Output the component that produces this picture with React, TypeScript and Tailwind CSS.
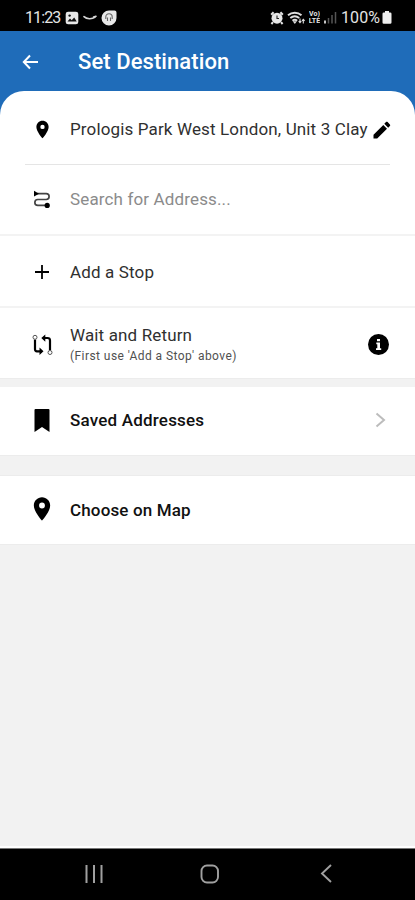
import type { ReactNode } from "react";

const PLACE =
  "M12 2C8.13 2 5 5.13 5 9c0 5.25 7 13 7 13s7-7.75 7-13c0-3.87-3.13-7-7-7zm0 9.5a2.5 2.5 0 0 1 0-5 2.5 2.5 0 0 1 0 5z";

function Pin({ className }: { className: string }) {
  return (
    <svg viewBox="0 0 24 24" className={className} fill="#000">
      <path d={PLACE} />
    </svg>
  );
}

function StatusBar() {
  return (
    <div className="flex h-[31px] items-center bg-black pt-[4px] text-[#e4e4e4]">
      <span className="ml-[25px] w-[36px] whitespace-nowrap text-[16px] leading-none tracking-[-0.9px]">11:23</span>
      <svg className="ml-[4px] h-[14px] w-[14px]" viewBox="0 0 14 14">
        <rect x="0.7" y="0.7" width="12.6" height="12.6" rx="2.4" fill="#e8e8e8" />
        <path d="M2.5 10.5 5 7.6l1.7 1.6 2.5-2.6 2.5 3.9z" fill="#111" />
        <circle cx="4.6" cy="4.6" r="1.2" fill="#111" />
      </svg>
      <svg className="ml-[4px] h-[8px] w-[14px]" viewBox="0 0 14 8">
        <path d="M1 2.6c2.8 2.6 7.8 2.8 11.2.4M10.6 3l2.4-.8" fill="none" stroke="#d6d6d6" strokeWidth="1.6" strokeLinecap="round" />
      </svg>
      <svg className="ml-[4px] h-[16px] w-[16px]" viewBox="0 0 16 16">
        <path d="M8 .5H13.5Q15.5.5 15.5 2.5V8A7.5 7.5 0 1 1 8 .5z" fill="#e8e8e8" />
        <path d="M4.8 9V7a3.2 3.2 0 0 1 6.4 0v2M6.500 7.500v3.500M9.500 7.500v3.500" fill="none" stroke="#666" strokeWidth="1.1" />
      </svg>
      <svg className="ml-[153px] h-[14px] w-[14px]" viewBox="0 0 14 14">
        <path d="M1.200 3.800 3.600 1.200M12.800 3.800l-2.400-2.600M3 11.200l-1.600 1.800M11 11.200l1.600 1.800" stroke="#e4e4e4" strokeWidth="2" />
        <circle cx="7" cy="7.200" r="5.500" fill="#e8e8e8" />
        <path d="M7 4.500v3h2" fill="none" stroke="#222" strokeWidth="1.100" />
      </svg>
      <svg className="ml-[3px] h-[14px] w-[19px]" viewBox="0 0 19 14">
        <path d="M1 4.200C5 .9 10.600.9 14.500 4.200M3.300 7c2.700-2.200 6.200-2.200 8.900 0M5.500 9.700c1.400-1.200 3.200-1.200 4.600 0" fill="none" stroke="#dedede" strokeWidth="2" />
        <path d="M7.800 13 5.700 10.200h4.200z" fill="#dedede" />
        <path d="M13 7.500v4M11.700 10.200l1.300 1.500 1.300-1.500M16.300 12.500v-4M15 9.800l1.300-1.500 1.300 1.500" fill="none" stroke="#dedede" strokeWidth="1.100" />
      </svg>
      <div className="ml-[2px] flex w-[13px] flex-col items-center text-[7px] font-bold leading-[7px]">
        <span className="block h-[7px] overflow-hidden">Vo)</span>
        <span className="block h-[7px] overflow-hidden">LTE</span>
      </div>
      <svg className="ml-[3px] h-[13px] w-[13px]" viewBox="0 0 13 13">
        <path d="M1 12.500V9.500" stroke="#ddd" strokeWidth="1.800" />
        <path d="M4.500 12.500V7M8 12.500V4M11.500 12.500V1" stroke="#555" strokeWidth="1.500" />
      </svg>
      <span className="ml-[4px] w-[41px] whitespace-nowrap text-[16px] leading-none tracking-[0.100px]">100%</span>
      <svg className="h-[13px] w-[10px]" viewBox="0 0 10 13">
        <path d="M3 0h4v1.500h1.200q1.300 0 1.300 1.300v8.700q0 1.300-1.300 1.300H1.800Q.5 12.800.5 11.500V2.800q0-1.300 1.300-1.300H3z" fill="#eee" />
      </svg>
    </div>
  );
}

function Row({ icon, children, className }: { icon: ReactNode; children: ReactNode; className: string }) {
  return (
    <div className={`flex items-center pl-[28px] ${className}`}>
      <div className="mr-[14px] flex w-[28px] shrink-0 items-center justify-center">{icon}</div>
      {children}
    </div>
  );
}

export default function App() {
  return (
    <div className="flex h-[900px] w-[415px] flex-col overflow-hidden bg-[#f2f2f2] font-[Roboto,sans-serif] text-[#303030]">
      <StatusBar />
      <div className="bg-[#1f6cb9]">
        <header className="flex h-[60px] items-center">
          <svg className="ml-[22px] mt-[1px] h-[16px] w-[17px]" viewBox="0 0 17 16">
            <path d="M8 1.500 1.800 8 8 14.500M2 8h14" fill="none" stroke="#fff" strokeWidth="2" />
          </svg>
          <h1 className="ml-[39px] mt-[1px] whitespace-nowrap text-[22px] font-medium tracking-[0.080px] text-white">Set Destination</h1>
        </header>
        <div className="rounded-t-[24px] bg-white">
          <Row className="h-[73px] pt-[4px]" icon={<Pin className="h-[21px] w-[21px]" />}>
            <span className="w-[298px] whitespace-nowrap pt-px text-[17px] tracking-[0.140px]">Prologis Park West London, Unit 3 Clay</span>
            <svg className="ml-[5px] h-[18px] w-[18px]" viewBox="0 0 18 18">
              <path d="M.5 13.800v3.700h3.700L14 7.700 10.300 4zM16.900 5c.5-.5.5-1.100 0-1.600l-2.300-2.300c-.5-.5-1.100-.5-1.600 0l-1.700 1.700L15.200 6.700z" fill="#000" />
            </svg>
          </Row>
          <div className="mx-[25px] h-px bg-[#e5e5e5]" />
        </div>
      </div>
      <Row
        className="h-[69px] bg-white"
        icon={
          <svg className="h-[19px] w-[18px]" viewBox="0 0 18 19">
            <path d="M4 3.700h9.200a2.900 2.900 0 0 1 0 5.800H4.800a2.900 2.900 0 0 0 0 5.900H13" fill="none" stroke="#444" strokeWidth="1.700" />
            <path d="M1 .8 6 3.700 1 6.600z" fill="#000" />
            <circle cx="14.200" cy="15.400" r="2.600" fill="#000" />
          </svg>
        }
      >
        <span className="whitespace-nowrap text-[17px] tracking-[0.140px] text-[#8b8b8b]">Search for Address...</span>
      </Row>
      <Row
        className="h-[72px] border-t-2 border-[#f3f3f3] bg-white"
        icon={
          <svg className="mt-[2px] h-[14px] w-[14px]" viewBox="0 0 14 14">
            <path d="M7 0v14M0 7h14" stroke="#000" strokeWidth="1.800" />
          </svg>
        }
      >
        <span className="whitespace-nowrap pt-[3px] text-[17px] tracking-[0.140px]">Add a Stop</span>
      </Row>
      <Row
        className="h-[72px] border-t-2 border-[#f3f3f3] bg-white"
        icon={
          <svg className="mt-[4px] h-[22px] w-[21px]" viewBox="0 0 21 22">
            <g fill="none" stroke="#000" strokeWidth="2.200">
              <path d="M3 5.500v9.800q0 2 2 2h5" />
              <path d="M18 16.500V6.500q0-2.500-2.500-2.500H11" />
            </g>
            <path d="M7.500 13.500 11.500 17.300 7.500 21zM13.300.500 9.300 4l4 3.700z" fill="#000" />
            <circle cx="3" cy="3.300" r="2" fill="#fff" stroke="#555" />
            <circle cx="18" cy="18.500" r="2" fill="#fff" stroke="#555" />
          </svg>
        }
      >
        <div className="flex w-[298px] flex-col pt-[4px]">
          <span className="whitespace-nowrap text-[17px] leading-[22px] tracking-[0.140px]">Wait and Return</span>
          <span className="whitespace-nowrap text-[12px] leading-[21px] tracking-[0.430px] text-[#505050]">(First use 'Add a Stop' above)</span>
        </div>
        <svg className="mt-[2px] h-[21px] w-[21px]" viewBox="0 0 21 21">
          <circle cx="10.500" cy="10.500" r="10.500" fill="#000" />
          <path d="M9 5h3v2.200H9zM8.300 8.500H12v5.700h1.200V16H8v-1.800h1.300v-4h-1z" fill="#fff" />
        </svg>
      </Row>
      <div className="h-[9px] border-t border-[#ececec]" />
      <Row
        className="h-[68px] bg-white"
        icon={
          <svg className="mt-[-2px] h-[23px] w-[16px]" viewBox="0 0 16 23">
            <path d="M.5 1q0-1 1-1h13q1 0 1 1v22L8 18 .5 23z" fill="#000" />
          </svg>
        }
      >
        <span className="w-[300px] whitespace-nowrap text-[17px] font-medium tracking-[0.200px] text-[#111]">Saved Addresses</span>
        <svg className="ml-[5px] mt-[-2px] h-[16px] w-[11px]" viewBox="0 0 11 16">
          <path d="m1.500 1.500 7.500 6.500-7.500 6.500" fill="none" stroke="#bcbcbc" strokeWidth="2" />
        </svg>
      </Row>
      <div className="h-[21px] border-y border-[#ececec]" />
      <Row className="h-[69px] border-b border-[#ececec] bg-white" icon={<Pin className="mt-[-2px] h-[28px] w-[28px]" />}>
        <span className="whitespace-nowrap pt-px text-[17px] font-medium tracking-[0.150px] text-[#111]">Choose on Map</span>
      </Row>
      <div className="flex-1" />
      <div className="h-[2px] bg-white" />
      <nav className="flex h-[52px] items-center border-t border-[#777] bg-black pb-[2px]">
        <svg className="ml-[85px] h-[18px] w-[18px]" viewBox="0 0 18 18">
          <path d="M1.500 0v18M9 0v18M16.500 0v18" stroke="#a0a0a0" strokeWidth="2" />
        </svg>
        <svg className="ml-[97px] h-[20px] w-[20px]" viewBox="0 0 20 20">
          <rect x="1.500" y="1.500" width="16.500" height="17" rx="5.500" fill="none" stroke="#a0a0a0" strokeWidth="1.900" />
        </svg>
        <svg className="ml-[100px] h-[19px] w-[12px]" viewBox="0 0 12 19">
          <path d="M11 1 2 9.500l9 8.500" fill="none" stroke="#a0a0a0" strokeWidth="1.900" />
        </svg>
      </nav>
    </div>
  );
}
